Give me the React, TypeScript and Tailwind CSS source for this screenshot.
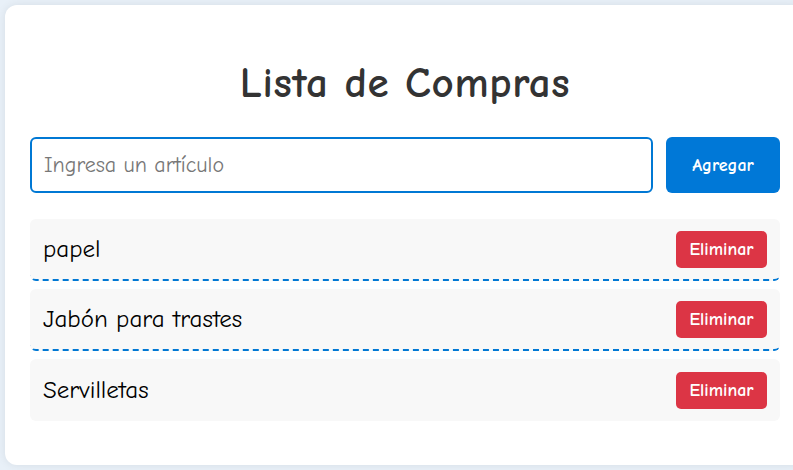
import React from "react";

const items = ["papel", "Jabón para trastes", "Servilletas"];

export default function App() {
  return (
    <div
      className="w-[793px] h-[470px] overflow-hidden bg-[#e8f0f8] pl-[5px] pt-[5px]"
      style={{ fontFamily: '"Comic Sans MS", "Comic Neue", "Noto Sans", sans-serif' }}
    >
      <div className="w-[800px] h-[460px] bg-white rounded-[12px] shadow-[0_0_10px_rgba(0,0,0,0.08)] px-[25px] pt-[25px]">
        <h1 className="mt-[25px] h-[56px] flex items-center justify-center text-[43px] font-bold text-[#333] leading-none mb-[26px] tracking-[0.6px]">
          Lista de Compras
        </h1>
        <div className="flex gap-[13px] h-[56px]">
          <div className="flex-1 border-2 border-[#0078d4] rounded-[6px] flex items-center px-[12px]">
            <span className="text-[22px] text-[#777]">Ingresa un artículo</span>
          </div>
          <button className="w-[114px] bg-[#0078d7] rounded-[6px] text-white text-[18px] font-bold">
            Agregar
          </button>
        </div>
        <ul className="mt-[26px] flex flex-col gap-[8px]">
          {items.map((it, i) => (
            <li
              key={it}
              className={
                "h-[62px] bg-[#f8f8f8] rounded-[6px] flex items-center justify-between pl-[13px] pr-[13px] " +
                (i < items.length - 1 ? "border-b-2 border-dashed border-[#0078d4]" : "")
              }
            >
              <span className="text-[25px] text-black">{it}</span>
              <button className="w-[91px] h-[37px] bg-[#dc3545] rounded-[5px] text-white text-[18px] font-bold">
                Eliminar
              </button>
            </li>
          ))}
        </ul>
      </div>
    </div>
  );
}
